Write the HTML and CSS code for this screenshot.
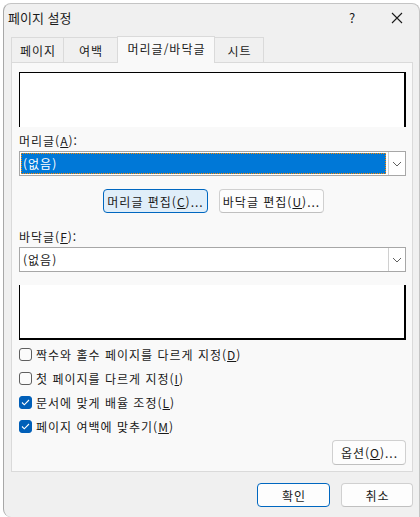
FILE: index.html
```html
<!DOCTYPE html>
<html lang="ko">
<head>
<meta charset="utf-8">
<link rel="stylesheet" href="styles.css">
</head>
<body>
<div class="window">
  <div class="titlebar">
    <span class="title">페이지 설정</span>
    <span class="help">?</span>
    <svg class="close" width="12" height="12" viewBox="0 0 12 12"><path d="M1 1 L11 11 M11 1 L1 11" stroke="#1a1a1a" stroke-width="1.1" fill="none"/></svg>
  </div>
  <div class="tabs">
    <div class="tab">페이지</div>
    <div class="tab">여백</div>
    <div class="tab active">머리글/바닥글</div>
    <div class="tab">시트</div>
  </div>
  <div class="panel">
    <div class="preview top"></div>
    <div class="label">머리글(<u>A</u>):</div>
    <div class="combo">
      <div class="value selected"><span>(없음)</span></div>
      <div class="drop"><svg width="10" height="6" viewBox="0 0 10 6"><path d="M1 1 L5 5 L9 1" stroke="#606060" stroke-width="1" fill="none"/></svg></div>
    </div>
    <div class="btnrow">
      <div class="btn primary">머리글 편집(<u>C</u>)...</div>
      <div class="btn">바닥글 편집(<u>U</u>)...</div>
    </div>
    <div class="label l2">바닥글(<u>F</u>):</div>
    <div class="combo">
      <div class="value"><span>(없음)</span></div>
      <div class="drop"><svg width="10" height="6" viewBox="0 0 10 6"><path d="M1 1 L5 5 L9 1" stroke="#606060" stroke-width="1" fill="none"/></svg></div>
    </div>
    <div class="preview bottom"></div>
    <div class="checks">
      <div class="check"><span class="box"></span>짝수와 홀수 페이지를 다르게 지정(<u>D</u>)</div>
      <div class="check"><span class="box"></span>첫 페이지를 다르게 지정(<u>I</u>)</div>
      <div class="check"><span class="box on"><svg width="9" height="7" viewBox="0 0 9 7"><path d="M1 3.5 L3.3 5.8 L8 1" stroke="#fff" stroke-width="1.1" fill="none"/></svg></span>문서에 맞게 배율 조정(<u>L</u>)</div>
      <div class="check"><span class="box on"><svg width="9" height="7" viewBox="0 0 9 7"><path d="M1 3.5 L3.3 5.8 L8 1" stroke="#fff" stroke-width="1.1" fill="none"/></svg></span>페이지 여백에 맞추기(<u>M</u>)</div>
    </div>
    <div class="optrow"><div class="btn opt">옵션(<u>O</u>)...</div></div>
  </div>
  <div class="footer">
    <div class="btn ok">확인</div>
    <div class="btn cancel">취소</div>
  </div>
</div>
</body>
</html>
```

FILE: styles.css
```css
html, body {
  margin: 0;
  padding: 0;
  background: #ffffff;
}
body {
  font-family: "Noto Sans CJK KR", "Noto Sans", sans-serif;
  font-size: 12px;
  color: #1a1a1a;
}
u { text-decoration: underline; text-underline-offset: 1px; }
.window {
  margin: 3px 0 0 3px;
  width: 417px;
  height: 514px;
  box-sizing: border-box;
  background: #f0f0f0;
  border: 1px solid #c4c4c4;
  border-left-color: #a8a8a8;
  border-bottom: none;
  border-radius: 8px 8px 0 8px;
  padding: 0 6px 0 7px;
  display: flex;
  flex-direction: column;
}
.titlebar {
  height: 33px;
  display: flex;
  align-items: center;
  margin-left: -3px;
}
.title {
  font-size: 13px;
  flex: 1;
  margin-top: -6px;
}
.help {
  font-size: 13px;
  width: 12px;
  margin-top: -6px;
  margin-right: 30px;
}
.close {
  margin-top: -6px;
  margin-right: 10px;
}
.tabs {
  display: flex;
  height: 25px;
  align-items: flex-end;
  position: relative;
  z-index: 1;
  letter-spacing: 1px;
}
.tab {
  height: 25px;
  box-sizing: border-box;
  border: 1px solid #dadada;
  border-bottom: none;
  border-right: none;
  background: #f0f0f0;
  display: flex;
  align-items: center;
  justify-content: center;
  padding-top: 1px;
  padding-left: 1px;
}
.tab:nth-child(1) { width: 52px; }
.tab:nth-child(2) { width: 54px; }
.tab:nth-child(3) { width: 98px; }
.tab:nth-child(4) { width: 50px; border-right: 1px solid #dadada; }
.tab.active {
  height: 27px;
  margin-bottom: -1px;
  background: #f9f9f9;
  border-right: 1px solid #dadada;
  margin-right: -1px;
  padding-bottom: 4px;
}
.panel {
  height: 410px;
  box-sizing: border-box;
  background: #f9f9f9;
  border: 1px solid #dadada;
  padding: 9px 6px 0 7px;
  display: flex;
  flex-direction: column;
  letter-spacing: 1px;
}
.preview {
  background: #ffffff;
  height: 55px;
  box-sizing: border-box;
  border-left: 1px solid #000;
  border-right: 2px solid #000;
}
.preview.top {
  border-top: 1px solid #000;
}
.preview.bottom {
  margin-top: 13px;
  height: 55px;
  border-bottom: 2px solid #000;
}
.label {
  height: 24px;
  display: flex;
  align-items: center;
  padding-top: 2px;
  box-sizing: border-box;
}
.label.l2 { height: 21px; margin-top: 13px; padding-top: 0; }
.combo {
  height: 25px;
  box-sizing: border-box;
  border: 1px solid #a7a7a7;
  background: #fff;
  display: flex;
  padding: 1px;
}
.value {
  flex: 1;
  display: flex;
  align-items: center;
  padding-left: 2px;
}
.value.selected {
  background: #0078d7;
  color: #fff;
  outline: 1px dotted #ff8a00;
  outline-offset: -1px;
}
.drop {
  width: 16px;
  margin: -1px -1px -1px 2px;
  border-left: 1px solid #d0d0d0;
  display: flex;
  align-items: center;
  justify-content: center;
}
.btnrow {
  display: flex;
  justify-content: center;
  gap: 11px;
  margin-top: 13px;
  padding-left: 1px;
}
.btn {
  height: 24px;
  box-sizing: border-box;
  border: 1px solid #d0d0d0;
  border-bottom-color: #c0c0c0;
  border-radius: 4px;
  background: #fdfdfd;
  display: flex;
  align-items: center;
  justify-content: center;
  letter-spacing: 1px;
  padding-left: 1px;
}
.btnrow .btn { width: 105px; }
.btn.primary {
  background: #e0eef9;
  border: 1px solid #0067c0;
}
.checks {
  margin-top: 2px;
  display: flex;
  flex-direction: column;
}
.check {
  height: 24px;
  display: flex;
  align-items: center;
}
.box {
  width: 13px;
  height: 13px;
  box-sizing: border-box;
  border: 1px solid #5f5f5f;
  border-radius: 3px;
  background: #fbfbfb;
  margin-right: 4px;
  display: flex;
  align-items: center;
  justify-content: center;
}
.box.on {
  background: #005fb8;
  border-color: #005fb8;
}
.optrow {
  display: flex;
  justify-content: flex-end;
  margin-top: 2px;
}
.btn.opt { width: 74px; height: 25px; }
.footer {
  display: flex;
  justify-content: flex-end;
  gap: 11px;
  margin-top: 11px;
}
.btn.ok {
  width: 73px;
  border: 1px solid #0067c0;
}
.btn.cancel { width: 72px; }
```
